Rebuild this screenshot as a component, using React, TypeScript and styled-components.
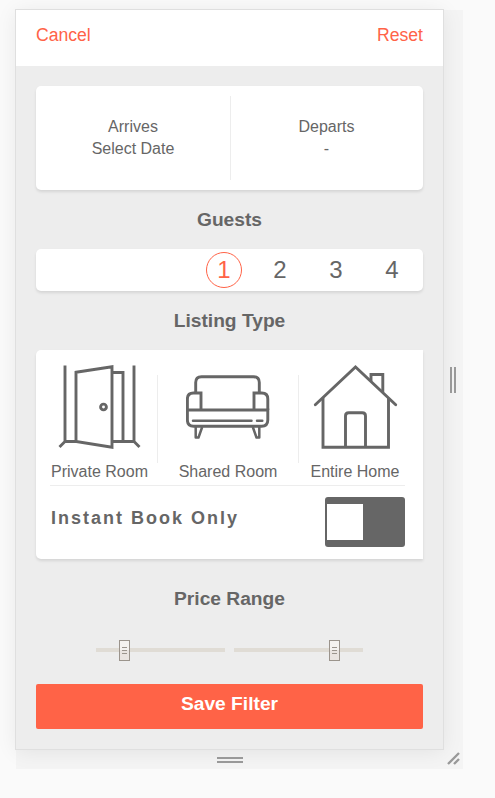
import React, { useState } from "react";
import styled, { createGlobalStyle } from "styled-components";

const ink = "#666";
const accent = "#ff6347";

const GlobalStyle = createGlobalStyle`
  *, *::before, *::after { box-sizing: border-box; }
  body {
    margin: 0;
    background: #fafafa;
    font-family: "Liberation Sans", Arial, sans-serif;
    color: ${ink};
  }
  button { font: inherit; color: inherit; border: 0; background: none; padding: 0; }
`;

const Stage = styled.div`
  height: 798px;
  padding: 10px 0 0 16px;
  overflow: hidden;
`;

const Resizable = styled.div`
  display: grid;
  grid-template-columns: 427px 20px;
  grid-template-rows: 739px 20px;
  width: 447px;
  background: #f4f4f4;
`;

const Device = styled.main`
  display: flex;
  flex-direction: column;
  background: #ededed;
  box-shadow: 0 0 0 1px #dfdfdf, 0 2px 20px rgba(0, 0, 0, 0.08);
`;

const Handle = styled.div<{ $corner?: boolean; $side?: boolean }>`
  display: flex;
  align-items: ${(p) => (p.$corner ? "flex-start" : "center")};
  justify-content: center;
  padding-top: ${(p) => (p.$corner ? "3px" : p.$side ? "0" : "2px")};
`;

const Header = styled.header`
  display: flex;
  justify-content: space-between;
  height: 56px;
  padding: 15px 20px 0;
  background: #fff;
`;

const HeaderLink = styled.button`
  height: 20px;
  font-size: 17.6px;
  line-height: 20px;
  color: ${accent};
`;

const Body = styled.div`
  display: flex;
  flex-direction: column;
  padding: 20px 20px 0;
`;

const Card = styled.section<{ $height: number; $squareRight?: boolean }>`
  height: ${(p) => p.$height}px;
  background: #fff;
  border-radius: ${(p) => (p.$squareRight ? "5px 0 0 5px" : "5px")};
  box-shadow: 0 2px 3px rgba(0, 0, 0, 0.1);
`;

const Dates = styled(Card)`
  display: flex;
  padding: 10px 0;
`;

const DateField = styled.div<{ $width: number }>`
  width: ${(p) => p.$width}px;
  padding-top: 20px;
  font-size: 16px;
  line-height: 22px;
  text-align: center;
`;

const Divider = styled.div`
  width: 1px;
  background: #ededed;
`;

const Title = styled.h2<{ $height: number; $top: number }>`
  height: ${(p) => p.$height}px;
  margin: 0;
  padding-top: ${(p) => p.$top}px;
  font-size: 19.2px;
  line-height: 22px;
  font-weight: 700;
  text-align: center;
`;

const Guests = styled(Card)`
  display: flex;
  justify-content: flex-end;
  align-items: center;
  gap: 20px;
  padding-right: 13px;
`;

const Guest = styled.button<{ $selected: boolean }>`
  width: 36px;
  height: 36px;
  border: 1px solid ${(p) => (p.$selected ? accent : "transparent")};
  border-radius: 50%;
  font-size: 24px;
  line-height: 34px;
  text-align: center;
  color: ${(p) => (p.$selected ? accent : ink)};
`;

const TypeRow = styled.div`
  display: flex;
  height: 135px;
  padding-left: 6px;
  ${Divider} { height: 88px; margin-top: 25px; }
`;

const TypeOption = styled.div<{ $width: number }>`
  display: flex;
  flex-direction: column;
  align-items: center;
  width: ${(p) => p.$width}px;
  padding-top: 14px;
  font-size: 16px;
  line-height: 18px;
  white-space: nowrap;
  svg { display: block; margin-bottom: 13px; }
`;

const InstantRow = styled.div`
  display: flex;
  justify-content: space-between;
  width: 355px;
  height: 74px;
  margin-left: 14px;
  padding: 11px 0 0 1px;
  border-top: 1px solid #ededed;
`;

const InstantLabel = styled.strong`
  padding-top: 10px;
  font-size: 18px;
  line-height: 22px;
  letter-spacing: 2px;
`;

const Toggle = styled.button<{ $on: boolean }>`
  display: flex;
  align-items: center;
  justify-content: ${(p) => (p.$on ? "flex-end" : "flex-start")};
  width: 80px;
  height: 50px;
  padding: 0 2px;
  border-radius: 3px;
  background: ${(p) => (p.$on ? accent : ink)};
`;

const Knob = styled.span`
  width: 36px;
  height: 36px;
  background: #fff;
`;

const Sliders = styled.div`
  display: flex;
  justify-content: center;
  gap: 9px;
  height: 44px;
`;

const Track = styled.div<{ $offset: number }>`
  display: flex;
  align-items: center;
  width: 129px;
  height: 21px;
  padding-left: ${(p) => p.$offset}px;
  background: linear-gradient(#e0dcd5, #e0dcd5) 0 8px / 129px 4px no-repeat;
`;

const Thumb = styled.div`
  display: flex;
  flex-direction: column;
  align-items: center;
  justify-content: center;
  gap: 2px;
  width: 11px;
  height: 21px;
  border: 1px solid #9b948c;
  background: linear-gradient(#f5f2ef 50%, #eae4e0 50%);
`;

const Grip = styled.i`
  width: 5px;
  height: 1px;
  background: #9b948c;
`;

const Save = styled.button`
  height: 45px;
  padding-bottom: 6px;
  border-radius: 2px;
  background: ${accent};
  color: #fff;
  font-size: 19.2px;
  font-weight: 700;
  text-align: center;
`;

const Drawing = ({ origin, children }: { origin: number; children: React.ReactNode }) => (
  <svg width="85" height="86" viewBox={`${origin} 364 85 86`} fill="none" stroke={ink} strokeWidth="2.9">
    {children}
  </svg>
);

const DoorIcon = () => (
  <Drawing origin={57}>
    <path d="M65 365.5V441.5L59.5 447M65 441.5H76M134 365.5V441.5L139.5 447M112 441.5H134M112 372.5H123V441.5" />
    <path d="M76 372.2L112 366.7V447.3L76 441.5Z" />
    <circle cx="103.5" cy="407" r="2.9" />
  </Drawing>
);

const SofaIcon = () => (
  <Drawing origin={186}>
    <path d="M195.7 393V382.5Q195.7 376.7 201.5 376.7H253.5Q259.3 376.7 259.3 382.5V393" />
    <path d="M187.4 410V399Q187.4 393 193.4 393H201V410M267.8 410V399Q267.8 393 261.8 393H254V410" />
    <path d="M187.4 410H267.8V420Q267.8 426.2 261.6 426.2H193.6Q187.4 426.2 187.4 420Z" />
    <path d="M193 420.7H251.5M257 420.7H262.3" strokeLinecap="round" strokeWidth="2.5" />
    <path d="M195.7 427V437.5H198.5L202.2 427M259.3 427V437.5H256.5L252.8 427" strokeWidth="2.5" strokeLinejoin="round" />
  </Drawing>
);

const HouseIcon = () => (
  <Drawing origin={313}>
    <path d="M315.3 404.8L355.5 367L395.7 404.8" strokeLinecap="round" />
    <path d="M323 398V447.3H388.5V398M371 381V374.5H382.8V392" />
    <path d="M345.5 447V416Q345.5 412.8 348.7 412.8H362.3Q365.5 412.8 365.5 416V447" />
  </Drawing>
);

const Slider = ({ offset }: { offset: number }) => (
  <Track $offset={offset}>
    <Thumb>
      <Grip />
      <Grip />
      <Grip />
    </Thumb>
  </Track>
);

export default function App() {
  const [guests, setGuests] = useState(1);
  const [instant, setInstant] = useState(false);

  return (
    <>
      <GlobalStyle />
      <Stage>
        <Resizable>
          <Device>
            <Header>
              <HeaderLink>Cancel</HeaderLink>
              <HeaderLink onClick={() => setGuests(1)}>Reset</HeaderLink>
            </Header>
            <Body>
              <Dates $height={104}>
                <DateField $width={194}>Arrives<br />Select Date</DateField>
                <Divider />
                <DateField $width={191}>Departs<br />-</DateField>
              </Dates>
              <Title $height={59} $top={19}>Guests</Title>
              <Guests $height={42}>
                {[1, 2, 3, 4].map((n) => (
                  <Guest key={n} $selected={n === guests} onClick={() => setGuests(n)}>{n}</Guest>
                ))}
              </Guests>
              <Title $height={59} $top={19}>Listing Type</Title>
              <Card $height={209} $squareRight>
                <TypeRow>
                  <TypeOption $width={115}><DoorIcon />Private Room</TypeOption>
                  <Divider />
                  <TypeOption $width={140}><SofaIcon />Shared Room</TypeOption>
                  <Divider />
                  <TypeOption $width={112}><HouseIcon />Entire Home</TypeOption>
                </TypeRow>
                <InstantRow>
                  <InstantLabel>Instant Book Only</InstantLabel>
                  <Toggle $on={instant} onClick={() => setInstant(!instant)} aria-label="Instant Book Only">
                    <Knob />
                  </Toggle>
                </InstantRow>
              </Card>
              <Title $height={81} $top={29}>Price Range</Title>
              <Sliders>
                <Slider offset={23} />
                <Slider offset={95} />
              </Sliders>
              <Save>Save Filter</Save>
            </Body>
          </Device>
          <Handle $side>
            <svg width="6" height="26" stroke="#999" strokeWidth="2"><path d="M1 0V26M5 0V26" /></svg>
          </Handle>
          <Handle>
            <svg width="26" height="6" stroke="#999" strokeWidth="2"><path d="M0 1H26M0 5H26" /></svg>
          </Handle>
          <Handle $corner>
            <svg width="13" height="13" stroke="#999" strokeWidth="2.4"><path d="M1 12L12 1M7 12L12 7" /></svg>
          </Handle>
        </Resizable>
      </Stage>
    </>
  );
}
